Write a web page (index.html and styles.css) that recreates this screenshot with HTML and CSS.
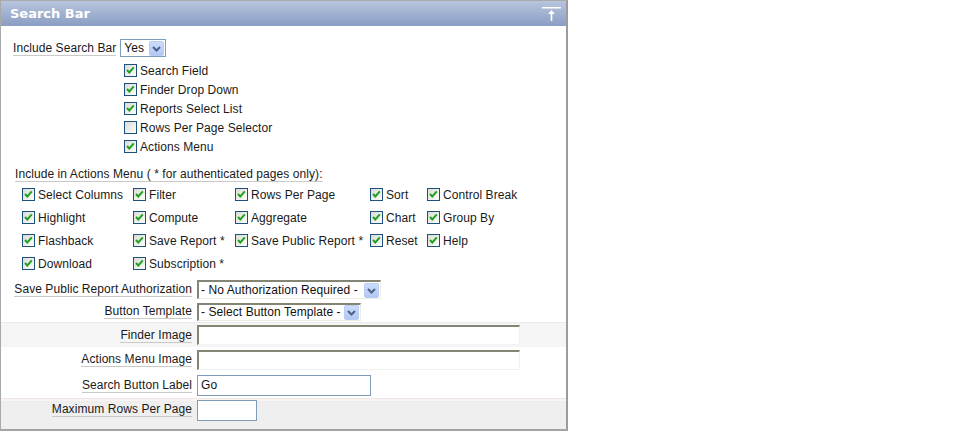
FILE: index.html
```html
<!DOCTYPE html>
<html>
<head>
<meta charset="utf-8">
<title>Search Bar</title>
<link rel="stylesheet" href="styles.css">
</head>
<body>
<div class="panel">
  <div class="hd">
    <span class="title">Search Bar</span>
    <span class="hd-ico"><svg width="19" height="15" viewBox="0 0 19 15"><rect x="0" y="0" width="19" height="1.5" fill="#fff"/><path d="M9.5 3 L6 7 H8.7 V14 H10.3 V7 H13 Z" fill="#fff"/></svg></span>
  </div>
  <div class="bd">
    <div class="row1">
      <span class="lbl">Include Search Bar</span>
      <span class="sel sel-yes"><span class="sel-txt">Yes</span><span class="arr"><svg width="13" height="13" viewBox="0 0 13 13"><path d="M3 5 L6.5 8.5 L10 5" fill="none" stroke="#4d6185" stroke-width="2"/></svg></span></span>
    </div>
    <ul class="cblist">
      <li><span class="cb"><svg width="11" height="11" viewBox="0 0 11 11"><path d="M2 5 L4.3 7.5 L8.8 2.3" fill="none" stroke="#21a121" stroke-width="2"/></svg></span>Search Field</li>
      <li><span class="cb"><svg width="11" height="11" viewBox="0 0 11 11"><path d="M2 5 L4.3 7.5 L8.8 2.3" fill="none" stroke="#21a121" stroke-width="2"/></svg></span>Finder Drop Down</li>
      <li><span class="cb"><svg width="11" height="11" viewBox="0 0 11 11"><path d="M2 5 L4.3 7.5 L8.8 2.3" fill="none" stroke="#21a121" stroke-width="2"/></svg></span>Reports Select List</li>
      <li><span class="cb"></span>Rows Per Page Selector</li>
      <li><span class="cb"><svg width="11" height="11" viewBox="0 0 11 11"><path d="M2 5 L4.3 7.5 L8.8 2.3" fill="none" stroke="#21a121" stroke-width="2"/></svg></span>Actions Menu</li>
    </ul>
    <div class="actlbl"><span class="lbl">Include in Actions Menu ( * for authenticated pages only):</span></div>
    <div class="grid">
      <div class="it"><span class="cb"><svg width="11" height="11" viewBox="0 0 11 11"><path d="M2 5 L4.3 7.5 L8.8 2.3" fill="none" stroke="#21a121" stroke-width="2"/></svg></span>Select Columns</div>
      <div class="it"><span class="cb"><svg width="11" height="11" viewBox="0 0 11 11"><path d="M2 5 L4.3 7.5 L8.8 2.3" fill="none" stroke="#21a121" stroke-width="2"/></svg></span>Filter</div>
      <div class="it"><span class="cb"><svg width="11" height="11" viewBox="0 0 11 11"><path d="M2 5 L4.3 7.5 L8.8 2.3" fill="none" stroke="#21a121" stroke-width="2"/></svg></span>Rows Per Page</div>
      <div class="it"><span class="cb"><svg width="11" height="11" viewBox="0 0 11 11"><path d="M2 5 L4.3 7.5 L8.8 2.3" fill="none" stroke="#21a121" stroke-width="2"/></svg></span>Sort</div>
      <div class="it"><span class="cb"><svg width="11" height="11" viewBox="0 0 11 11"><path d="M2 5 L4.3 7.5 L8.8 2.3" fill="none" stroke="#21a121" stroke-width="2"/></svg></span>Control Break</div>

      <div class="it"><span class="cb"><svg width="11" height="11" viewBox="0 0 11 11"><path d="M2 5 L4.3 7.5 L8.8 2.3" fill="none" stroke="#21a121" stroke-width="2"/></svg></span>Highlight</div>
      <div class="it"><span class="cb"><svg width="11" height="11" viewBox="0 0 11 11"><path d="M2 5 L4.3 7.5 L8.8 2.3" fill="none" stroke="#21a121" stroke-width="2"/></svg></span>Compute</div>
      <div class="it"><span class="cb"><svg width="11" height="11" viewBox="0 0 11 11"><path d="M2 5 L4.3 7.5 L8.8 2.3" fill="none" stroke="#21a121" stroke-width="2"/></svg></span>Aggregate</div>
      <div class="it"><span class="cb"><svg width="11" height="11" viewBox="0 0 11 11"><path d="M2 5 L4.3 7.5 L8.8 2.3" fill="none" stroke="#21a121" stroke-width="2"/></svg></span>Chart</div>
      <div class="it"><span class="cb"><svg width="11" height="11" viewBox="0 0 11 11"><path d="M2 5 L4.3 7.5 L8.8 2.3" fill="none" stroke="#21a121" stroke-width="2"/></svg></span>Group By</div>

      <div class="it"><span class="cb"><svg width="11" height="11" viewBox="0 0 11 11"><path d="M2 5 L4.3 7.5 L8.8 2.3" fill="none" stroke="#21a121" stroke-width="2"/></svg></span>Flashback</div>
      <div class="it"><span class="cb"><svg width="11" height="11" viewBox="0 0 11 11"><path d="M2 5 L4.3 7.5 L8.8 2.3" fill="none" stroke="#21a121" stroke-width="2"/></svg></span>Save Report *</div>
      <div class="it"><span class="cb"><svg width="11" height="11" viewBox="0 0 11 11"><path d="M2 5 L4.3 7.5 L8.8 2.3" fill="none" stroke="#21a121" stroke-width="2"/></svg></span>Save Public Report *</div>
      <div class="it"><span class="cb"><svg width="11" height="11" viewBox="0 0 11 11"><path d="M2 5 L4.3 7.5 L8.8 2.3" fill="none" stroke="#21a121" stroke-width="2"/></svg></span>Reset</div>
      <div class="it"><span class="cb"><svg width="11" height="11" viewBox="0 0 11 11"><path d="M2 5 L4.3 7.5 L8.8 2.3" fill="none" stroke="#21a121" stroke-width="2"/></svg></span>Help</div>

      <div class="it"><span class="cb"><svg width="11" height="11" viewBox="0 0 11 11"><path d="M2 5 L4.3 7.5 L8.8 2.3" fill="none" stroke="#21a121" stroke-width="2"/></svg></span>Download</div>
      <div class="it"><span class="cb"><svg width="11" height="11" viewBox="0 0 11 11"><path d="M2 5 L4.3 7.5 L8.8 2.3" fill="none" stroke="#21a121" stroke-width="2"/></svg></span>Subscription *</div>
    </div>
    <div class="form">
      <div class="frow r-auth">
        <div class="fl"><span class="lbl">Save Public Report Authorization</span></div>
        <div class="ff"><span class="sel sel-inset w-auth"><span class="sel-txt">- No Authorization Required -</span><span class="arr"><svg width="13" height="13" viewBox="0 0 13 13"><path d="M3 5 L6.5 8.5 L10 5" fill="none" stroke="#4d6185" stroke-width="2"/></svg></span></span></div>
      </div>
      <div class="frow r-btn">
        <div class="fl"><span class="lbl">Button Template</span></div>
        <div class="ff"><span class="sel sel-inset w-btn"><span class="sel-txt">- Select Button Template -</span><span class="arr"><svg width="13" height="13" viewBox="0 0 13 13"><path d="M3 5 L6.5 8.5 L10 5" fill="none" stroke="#4d6185" stroke-width="2"/></svg></span></span></div>
      </div>
      <div class="frow r-finder">
        <div class="fl"><span class="lbl">Finder Image</span></div>
        <div class="ff"><span class="inp inp-inset"></span></div>
      </div>
      <div class="frow r-actions">
        <div class="fl"><span class="lbl">Actions Menu Image</span></div>
        <div class="ff"><span class="inp inp-inset"></span></div>
      </div>
      <div class="frow r-go">
        <div class="fl"><span class="lbl">Search Button Label</span></div>
        <div class="ff"><span class="inp inp-blue w-go">Go</span></div>
      </div>
      <div class="frow r-max">
        <div class="fl"><span class="lbl">Maximum Rows Per Page</span></div>
        <div class="ff"><span class="inp inp-blue w-max"></span></div>
      </div>
    </div>
  </div>
</div>
</body>
</html>
```

FILE: styles.css
```css
body {
  margin: 0;
  font-family: "Liberation Sans", Arial, sans-serif;
  font-size: 12px;
  letter-spacing: 0.07px;
  color: #1a1a1a;
  background: #fff;
}

.panel {
  width: 565px;
  border-top: 1px solid #a9a9a9;
  border-left: 1px solid #a9a9a9;
  border-right: 2px solid #9c9c9c;
  border-bottom: 2px solid #a4a4a4;
  background: #fff;
}

.hd {
  height: 25px;
  display: flex;
  justify-content: space-between;
  padding: 0 5px 0 9px;
  background: linear-gradient(#b7c5dd, #8a9ec3);
}

.title {
  font: bold 13px/25px "DejaVu Sans", Verdana, sans-serif;
  letter-spacing: 0;
  color: #fff;
}

.hd-ico {
  margin-top: 6px;
  height: 15px;
}
.hd-ico svg { display: block; }

.lbl {
  display: inline-block;
  line-height: 14px;
  border-bottom: 1px solid #c9c9c9;
  white-space: nowrap;
}

.row1 {
  display: flex;
  align-items: center;
  height: 20px;
  margin-top: 12px;
  padding-left: 12px;
}
.row1 .lbl { margin-right: 4px; }

.sel {
  display: inline-flex;
  align-items: center;
  justify-content: space-between;
  box-sizing: border-box;
  background: #fff;
  white-space: nowrap;
  color: #111;
}

.sel-yes {
  width: 46px;
  height: 18px;
  border: 1px solid #7f9db9;
  padding: 0 1px 0 3px;
}

.sel-inset {
  border-style: solid;
  border-width: 2px 1px 1px 2px;
  border-color: #858575 #ecebe4 #ecebe4 #858575;
  padding: 0 1px 0 2px;
}
.w-auth { width: 184px; height: 19px; }
.w-btn { width: 164px; height: 18px; }

.arr {
  width: 15px;
  height: 15px;
  box-sizing: border-box;
  border: 1px solid #b8ccf3;
  border-radius: 2px;
  background: linear-gradient(#cddcfc, #b2c7f4);
  display: flex;
  align-items: center;
  justify-content: center;
  flex: none;
}
.arr svg { display: block; }

.cblist {
  list-style: none;
  margin: 3px 0 0;
  padding: 0 0 0 123px;
}
.cblist li {
  height: 19px;
  display: flex;
  align-items: center;
  white-space: nowrap;
}

.cb {
  width: 13px;
  height: 13px;
  box-sizing: border-box;
  border: 1px solid #1c5180;
  background: linear-gradient(135deg, #dcdcd5, #fdfdfb);
  margin-right: 3px;
  flex: none;
  display: flex;
}
.cb svg { display: block; }

.actlbl {
  display: flex;
  margin: 11px 0 0 14px;
}

.grid {
  display: grid;
  grid-template-columns: 111px 102px 135px 57px auto;
  grid-auto-rows: 23px;
  margin: 1px 0 0 21px;
}
.grid .it {
  display: flex;
  align-items: center;
  white-space: nowrap;
}

.form { margin-top: 3px; }

.frow {
  display: flex;
  align-items: center;
}
.fl {
  width: 191px;
  flex: none;
  display: flex;
  justify-content: flex-end;
}
.ff {
  margin-left: 5px;
  display: flex;
}

.r-auth { height: 23px; }
.r-btn { height: 21px; }
.r-finder {
  height: 24px;
  border-top: 1px solid #ebebeb;
  background: #f5f5f5;
}
.r-actions { height: 25px; }
.r-go { height: 26px; }
.r-max {
  height: 30px;
  align-items: flex-start;
  border-top: 1px solid #efe6e6;
  background: linear-gradient(#f8f4f4 0, #f8f4f4 2px, #f1ecec 2px, #f1ecec 3px, #efefef 3px);
}
.r-max .ff { margin-top: 1px; }
.r-max .fl { margin-top: 3px; }

.inp {
  display: block;
  box-sizing: border-box;
  background: #fff;
  color: #111;
}
.inp-inset {
  width: 323px;
  height: 20px;
  border-style: solid;
  border-width: 2px 1px 1px 2px;
  border-color: #858575 #f2f2f2 #f2f2f2 #858575;
}
.inp-blue {
  height: 21px;
  border: 1px solid #7f9db9;
  padding: 0 0 0 3px;
  line-height: 19px;
}
.w-go { width: 174px; }
.w-max { width: 60px; }
```
